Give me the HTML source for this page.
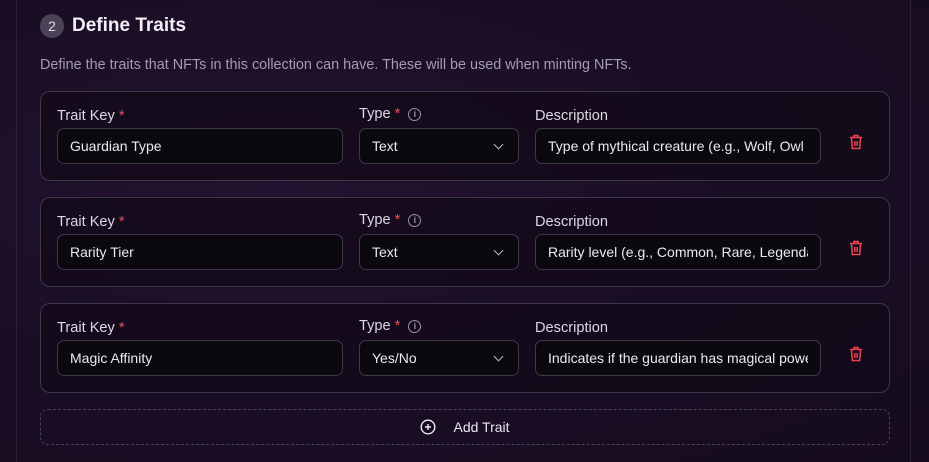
<!DOCTYPE html>
<html><head><style>
*{box-sizing:border-box;margin:0;padding:0}
body{width:929px;height:462px;overflow:hidden;background:#170c20;font-family:"Liberation Sans",sans-serif;color:#e8e4ee;position:relative}
.bg{position:absolute;inset:0;background:radial-gradient(ellipse at 30% 40%,#23122f 0%,#1a0e25 50%,#150b1d 100%)}
.vl{position:absolute;top:0;bottom:0;width:1px;background:#2a2233}
.h{position:absolute;left:40px;top:14px;display:flex;align-items:center}
.num{width:24px;height:24px;border-radius:50%;background:#4a4356;color:#ddd;font-size:14px;display:flex;align-items:center;justify-content:center;margin-right:8px}
.h b{font-size:19px;font-weight:bold;color:#f2eef6}
.sub{position:absolute;left:40px;top:57px;font-size:14.4px;color:#a39cb0;white-space:nowrap}
.card{position:absolute;left:40px;width:850px;height:90px;border:1px solid #3a3847;border-radius:10px;background:rgba(18,10,24,.75)}
.lbl{position:absolute;top:16px;font-size:14.6px;color:#ddd8e4}
.lbl i{color:#ef4f5b;font-style:normal;margin-left:4px}
.info{display:inline-block;width:13px;height:13px;border:1.3px solid #9a94a4;border-radius:50%;font-size:9px;color:#9a94a4;text-align:center;line-height:11px;margin-left:8px;vertical-align:1px;font-weight:bold}
.in{position:absolute;top:36px;height:36px;border:1px solid #3a3a4a;border-radius:7px;background:#0b0810;font-size:14px;color:#ece8f0;padding:0 12px;line-height:34px;white-space:nowrap}
.in span{display:block;overflow:hidden}
.chev{position:absolute;right:16px;top:12px;width:7px;height:7px;border-right:1.5px solid #bbb;border-bottom:1.5px solid #bbb;transform:rotate(45deg)}
.trash{position:absolute;left:808px;top:42px}
.add{position:absolute;left:40px;top:409px;width:850px;height:36px;border:1px dashed #4a4658;border-radius:8px;display:flex;align-items:center;justify-content:center;font-size:14px;color:#ece8f0}
</style></head><body>
<div class="bg"></div>
<div class="vl" style="left:16px"></div>
<div class="vl" style="left:910px"></div>
<div class="h"><div class="num">2</div><b>Define Traits</b></div>
<div class="sub">Define the traits that NFTs in this collection can have. These will be used when minting NFTs.</div>

<div class="card" style="top:91px">
<div class="lbl" style="left:16px">Trait Key<i>*</i></div>
<div class="lbl" style="left:318px;top:14px">Type<i>*</i><span class="info">i</span></div>
<div class="lbl" style="left:494px">Description</div>
<div class="in" style="left:16px;width:286px"><span>Guardian Type</span></div>
<div class="in" style="left:318px;width:160px">Text<div class="chev"></div></div>
<div class="in" style="left:494px;width:286px"><span>Type of mythical creature (e.g., Wolf, Owl</span></div>
<svg class="trash" width="14" height="16" viewBox="0 0 14 16" fill="none" stroke="#ef4450" stroke-width="1.5"><path d="M1 3.5h12M5 3.5V1.5h4v2M2.5 3.5l.8 11h7.4l.8-11M5.8 7v5M8.2 7v5"/></svg>
</div>

<div class="card" style="top:197px">
<div class="lbl" style="left:16px">Trait Key<i>*</i></div>
<div class="lbl" style="left:318px;top:14px">Type<i>*</i><span class="info">i</span></div>
<div class="lbl" style="left:494px">Description</div>
<div class="in" style="left:16px;width:286px"><span>Rarity Tier</span></div>
<div class="in" style="left:318px;width:160px">Text<div class="chev"></div></div>
<div class="in" style="left:494px;width:286px"><span>Rarity level (e.g., Common, Rare, Legendary)</span></div>
<svg class="trash" width="14" height="16" viewBox="0 0 14 16" fill="none" stroke="#ef4450" stroke-width="1.5"><path d="M1 3.5h12M5 3.5V1.5h4v2M2.5 3.5l.8 11h7.4l.8-11M5.8 7v5M8.2 7v5"/></svg>
</div>

<div class="card" style="top:303px">
<div class="lbl" style="left:16px">Trait Key<i>*</i></div>
<div class="lbl" style="left:318px;top:14px">Type<i>*</i><span class="info">i</span></div>
<div class="lbl" style="left:494px">Description</div>
<div class="in" style="left:16px;width:286px"><span>Magic Affinity</span></div>
<div class="in" style="left:318px;width:160px">Yes/No<div class="chev"></div></div>
<div class="in" style="left:494px;width:286px"><span>Indicates if the guardian has magical powers</span></div>
<svg class="trash" width="14" height="16" viewBox="0 0 14 16" fill="none" stroke="#ef4450" stroke-width="1.5"><path d="M1 3.5h12M5 3.5V1.5h4v2M2.5 3.5l.8 11h7.4l.8-11M5.8 7v5M8.2 7v5"/></svg>
</div>

<div class="add"><svg width="16" height="16" viewBox="0 0 16 16" fill="none" stroke="#eee" stroke-width="1.4" style="margin-right:17px"><circle cx="8" cy="8" r="6.8"/><path d="M8 5v6M5 8h6"/></svg>Add Trait</div>
</body></html>
